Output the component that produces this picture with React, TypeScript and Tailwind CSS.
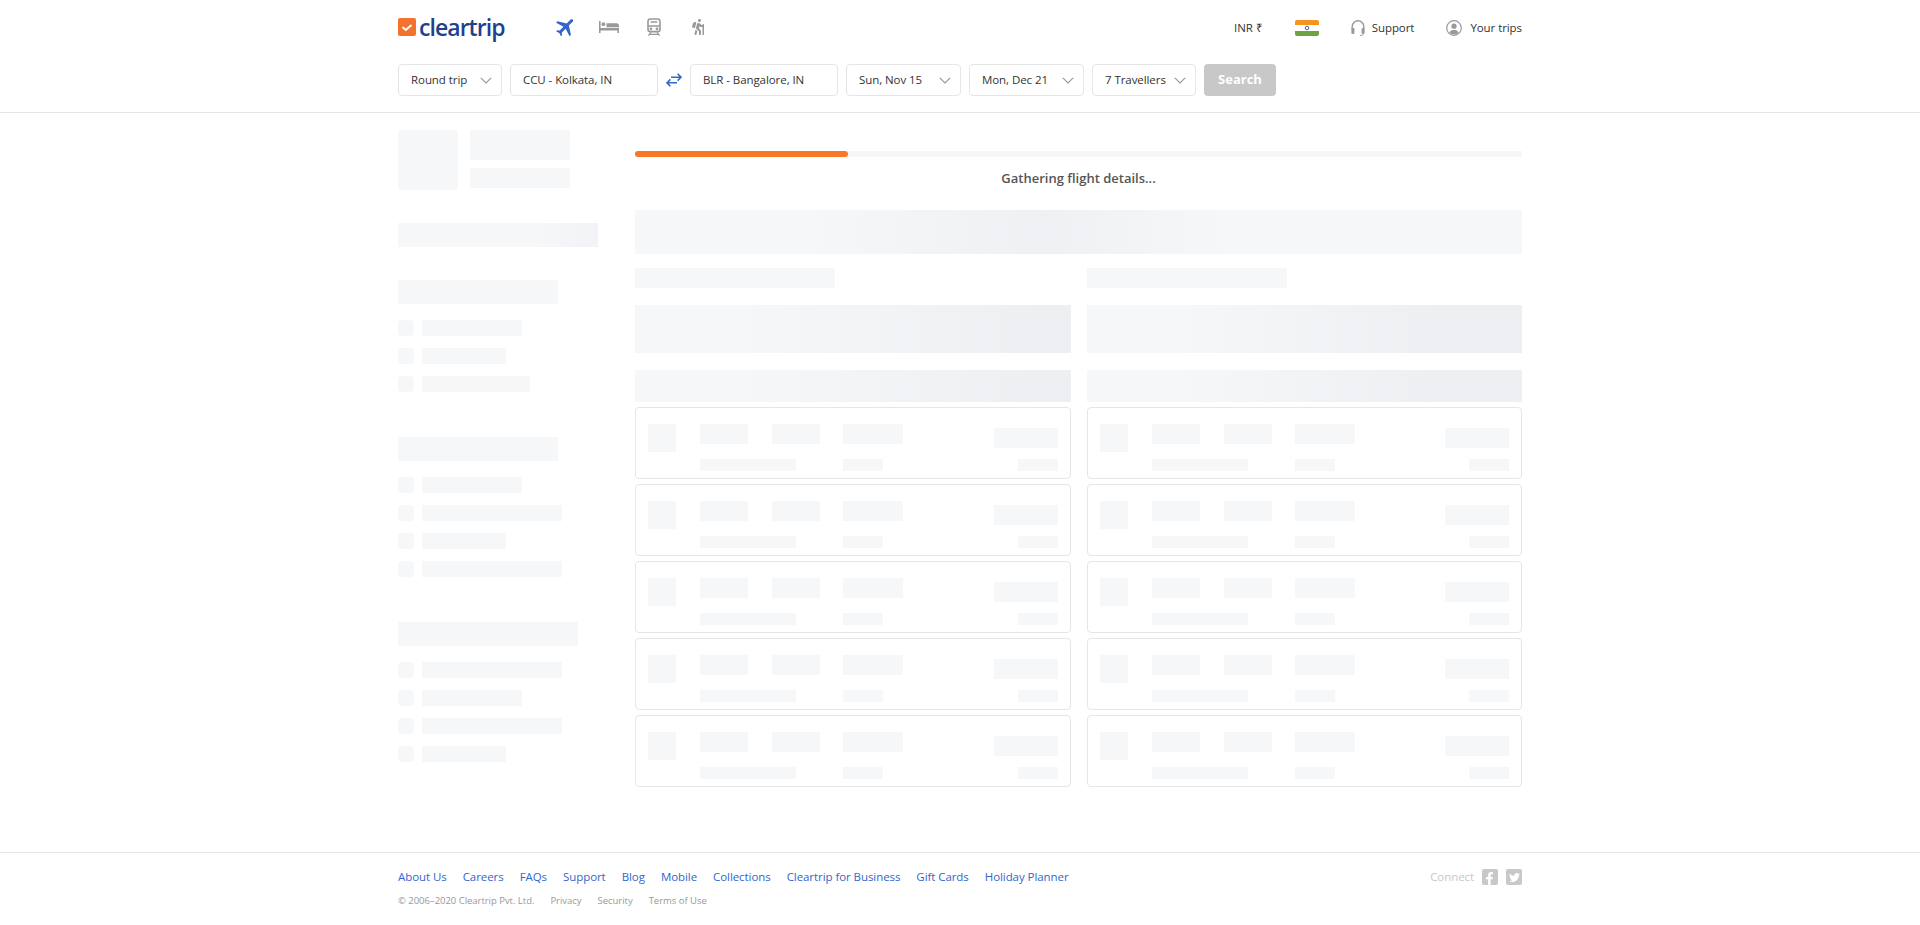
import { FaFacebookF, FaHiking, FaTwitter } from "react-icons/fa"

const Chevron = () => (
  <svg width="12" height="7" viewBox="0 0 12 7" fill="none" stroke="#999" strokeWidth="1.2" className="shrink-0">
    <path d="M.8.8 6 6l5.2-5.2" />
  </svg>
)

const Field = ({ label, className, arrow }: { label: string; className: string; arrow?: boolean }) => (
  <div className={`flex h-8 items-center justify-between rounded-[4px] border border-[#e6e6e6] bg-white pl-3 pr-[9px] text-[11.5px] tracking-[-0.07px] text-[#333] ${className}`}>
    <span>{label}</span>
    {arrow && <Chevron />}
  </div>
)

const Bar = ({ className }: { className: string }) => <div className={`bg-[#f6f7f9] ${className}`} />

const Row = ({ width }: { width: string }) => (
  <div className="flex gap-2">
    <Bar className="h-4 w-4 rounded-[4px]" />
    <Bar className={`h-4 ${width}`} />
  </div>
)

const FilterGroup = ({ className, title, rows }: { className: string; title: string; rows: string[] }) => (
  <div className={className}>
    <Bar className={`h-6 ${title}`} />
    <div className="mt-4 flex flex-col gap-3">
      {rows.map((w, i) => (
        <Row key={i} width={w} />
      ))}
    </div>
  </div>
)

const FlightCard = () => (
  <div className="flex h-[72px] rounded-[4px] border border-[#e6e6e6] pl-3 pr-3 pt-4">
    <Bar className="h-7 w-7" />
    <div className="ml-6">
      <div className="flex">
        <Bar className="h-5 w-12" />
        <Bar className="ml-6 h-5 w-12" />
        <Bar className="ml-[23px] h-5 w-[60px]" />
      </div>
      <div className="mt-[15px] flex">
        <Bar className="h-3 w-24" />
        <Bar className="ml-[47px] h-3 w-10" />
      </div>
    </div>
    <div className="ml-auto flex flex-col items-end pt-1">
      <Bar className="h-5 w-16" />
      <Bar className="mt-[11px] h-3 w-10" />
    </div>
  </div>
)

const Column = ({ bigBar, listBar }: { bigBar: string; listBar: string }) => (
  <div>
    <Bar className="mt-[14px] h-5 w-[200px]" />
    <div className={`mt-[17px] h-12 ${bigBar}`} />
    <div className={`mt-[17px] h-8 ${listBar}`} />
    <div className="mt-[5px] flex flex-col gap-[5px]">
      {[0, 1, 2, 3, 4].map((i) => (
        <FlightCard key={i} />
      ))}
    </div>
  </div>
)

const footerLinks = ["About Us", "Careers", "FAQs", "Support", "Blog", "Mobile", "Collections", "Cleartrip for Business", "Gift Cards", "Holiday Planner"]

export default function App() {
  return (
    <div className="flex min-h-[925px] flex-col bg-white font-['Open_Sans',sans-serif]">
      <header className="border-b border-[#e6e6e6]">
        <div className="mx-auto w-[1124px] pb-4">
          <div className="flex h-[54px] items-center">
            <div className="flex w-[156px] items-center">
              <svg width="18" height="18" viewBox="0 0 18 18">
                <rect width="18" height="18" rx="2" fill="#f4722b" />
                <path d="M4.5 9 7.8 12 13.5 7" fill="none" stroke="#fff" strokeWidth="2" />
              </svg>
              <span className="ml-[3px] text-[23px] leading-none font-semibold tracking-[-0.95px] text-[#1f3f8f]">cleartrip</span>
            </div>
            <div className="flex items-center">
              <svg width="24" height="24" viewBox="0 0 24 24" fill="#3366cc" className="rotate-45">
                <path d="M21 16v-2l-8-5V3.5c0-.83-.67-1.5-1.5-1.5S10 2.67 10 3.5V9l-8 5v2l8-2.5V19l-2 1.5V22l3.5-1 3.5 1v-1.5L13 19v-5.5l8 2.5z" />
              </svg>
              <svg width="20" height="12" viewBox="0 0 20 12" fill="#999" className="ml-[21px]">
                <path d="M0 0h1.6v7H20v5h-1.6V9.6H1.6V12H0z" />
                <circle cx="4.4" cy="3.2" r="1.9" />
                <path d="M7.5 2.2h10.2c1.3 0 2.3 1 2.3 2.3v1.7H7.5z" />
              </svg>
              <svg width="14" height="18" viewBox="0 0 14 18" fill="none" stroke="#999" strokeWidth="1.6" className="ml-7">
                <rect x="1" y="1" width="12" height="12.6" rx="2.4" />
                <path d="M1 8h12M3.6 4h6.8" />
                <path d="m4 14-2.6 3.6M10 14l2.6 3.6M3 16.4h8" strokeWidth="1.2" />
                <circle cx="4" cy="10.8" r=".6" fill="#999" />
                <circle cx="10" cy="10.8" r=".6" fill="#999" />
              </svg>
              <FaHiking className="ml-[29px] text-[16px] text-[#999]" />
            </div>
            <div className="ml-auto flex items-center pt-[2px] text-[11.5px] tracking-[-0.07px] text-[#333]">
              <span>INR ₹</span>
              <svg width="24" height="16" viewBox="0 0 24 16" className="ml-8">
                <rect width="24" height="16" rx="2" fill="#fff" />
                <path d="M0 5V2a2 2 0 0 1 2-2h20a2 2 0 0 1 2 2v3z" fill="#f7941d" />
                <path d="M0 11h24v3a2 2 0 0 1-2 2H2a2 2 0 0 1-2-2z" fill="#6ea344" />
                <circle cx="12" cy="8" r="1.8" fill="none" stroke="#3b6cb5" strokeWidth="1" />
              </svg>
              <svg width="14" height="16" viewBox="0 0 14 16" fill="none" className="ml-8">
                <path d="M1.2 9V6.5a5.8 5.8 0 0 1 11.6 0V9" stroke="#999" strokeWidth="1.4" />
                <rect x=".4" y="8" width="3" height="6" rx="1.2" fill="#999" />
                <rect x="10.6" y="8" width="3" height="6" rx="1.2" fill="#999" />
                <path d="M12 14c0 1-1 1.4-3 1.4" stroke="#999" />
              </svg>
              <span className="ml-[7px]">Support</span>
              <svg width="16" height="16" viewBox="0 0 16 16" fill="none" className="ml-8">
                <circle cx="8" cy="8" r="7.3" stroke="#999" strokeWidth="1.2" />
                <circle cx="8" cy="6.2" r="2.6" fill="#999" />
                <path d="M3.4 12.6C4.4 10.6 6 10 8 10s3.6.6 4.6 2.6A6.6 6.6 0 0 1 8 14.6a6.6 6.6 0 0 1-4.6-2z" fill="#999" />
              </svg>
              <span className="ml-2">Your trips</span>
            </div>
          </div>
          <div className="mt-[10px] flex items-center gap-2">
            <Field label="Round trip" className="w-[104px]" arrow />
            <Field label="CCU - Kolkata, IN" className="w-[148px]" />
            <svg width="16" height="14" viewBox="0 0 16 14" fill="none" stroke="#3366cc" strokeWidth="1.6">
              <path d="M5 4.2h10M11.6.8 15 4.2l-3.4 3.4" />
              <path d="M11 9.8H1M4.4 6.4 1 9.8l3.4 3.4" />
            </svg>
            <Field label="BLR - Bangalore, IN" className="w-[148px]" />
            <Field label="Sun, Nov 15" className="w-[115px]" arrow />
            <Field label="Mon, Dec 21" className="w-[115px]" arrow />
            <Field label="7 Travellers" className="w-[104px]" arrow />
            <button className="h-8 w-[72px] rounded-[4px] bg-[#c8c8c8] text-[13px] font-bold text-white">Search</button>
          </div>
        </div>
      </header>

      <main className="mx-auto flex h-[739px] w-[1124px]">
        <aside className="w-[200px] pt-[17px]">
          <div className="flex gap-3">
            <Bar className="h-[60px] w-[60px] rounded-[4px]" />
            <div>
              <Bar className="h-[30px] w-[100px]" />
              <Bar className="mt-2 h-5 w-[100px]" />
            </div>
          </div>
          <div className="mt-[33px] h-6 w-[200px] bg-[linear-gradient(90deg,#f6f7f9_70%,#f2f3f6_100%)]" />
          <FilterGroup className="mt-[33px]" title="w-[160px]" rows={["w-[100px]", "w-[84px]", "w-[108px]"]} />
          <FilterGroup className="mt-[45px]" title="w-[160px]" rows={["w-[100px]", "w-[140px]", "w-[84px]", "w-[140px]"]} />
          <FilterGroup className="mt-[45px]" title="w-[180px]" rows={["w-[140px]", "w-[100px]", "w-[140px]", "w-[84px]"]} />
        </aside>

        <section className="ml-[37px] w-[887px] pt-[38px]">
          <div className="h-[6px] bg-[#f6f6f6]">
            <div className="h-[6px] w-[213px] rounded-[3px] bg-[#f97828]" />
          </div>
          <p className="mt-[11px] text-center text-[13px] leading-5 font-semibold text-[#555]">Gathering flight details...</p>
          <div className="mt-[22px] h-11 bg-[linear-gradient(90deg,#f6f7f9_0%,#f6f7f9_20%,#eff0f3_46%,#f6f7f9_66%,#f6f7f9_100%)]" />
          <div className="grid grid-cols-[436px_435px] gap-4">
            <Column
              bigBar="bg-[linear-gradient(90deg,#f6f7f9_0%,#f6f7f9_25%,#eeeff2_92%,#eeeff2_100%)]"
              listBar="bg-[linear-gradient(90deg,#f6f7f9_0%,#f6f7f9_25%,#eeeff2_92%,#eeeff2_100%)]"
            />
            <Column
              bigBar="bg-[linear-gradient(90deg,#f6f7f9_0%,#f6f7f9_22%,#eeeff2_80%,#eeeff2_100%)]"
              listBar="bg-[linear-gradient(90deg,#f6f7f9_0%,#f6f7f9_22%,#eeeff2_80%,#eeeff2_100%)]"
            />
          </div>
        </section>
      </main>

      <footer className="border-t border-[#e6e6e6]">
        <div className="mx-auto flex w-[1124px] items-start justify-between pt-[14px]">
          <div>
            <div className="flex gap-4 text-[11.5px] leading-5 tracking-[-0.07px] text-[#3366cc]">
              {footerLinks.map((l) => (
                <a key={l}>{l}</a>
              ))}
            </div>
            <div className="mt-[7px] flex gap-4 text-[9.5px] leading-[14px] tracking-[-0.03px] text-[#999]">
              <span>© 2006–2020 Cleartrip Pvt. Ltd.</span>
              <a>Privacy</a>
              <a>Security</a>
              <a>Terms of Use</a>
            </div>
          </div>
          <div className="flex items-center gap-2">
            <span className="text-[11.5px] leading-5 tracking-[-0.07px] text-[#c8c8c8]">Connect</span>
            <span className="flex h-4 w-4 items-end justify-end overflow-hidden rounded-[2px] bg-[#c8c8c8] pr-[2px]">
              <FaFacebookF className="text-[13px] text-white" />
            </span>
            <span className="flex h-4 w-4 items-center justify-center rounded-[2px] bg-[#c8c8c8]">
              <FaTwitter className="text-[11px] text-white" />
            </span>
          </div>
        </div>
      </footer>
    </div>
  )
}
